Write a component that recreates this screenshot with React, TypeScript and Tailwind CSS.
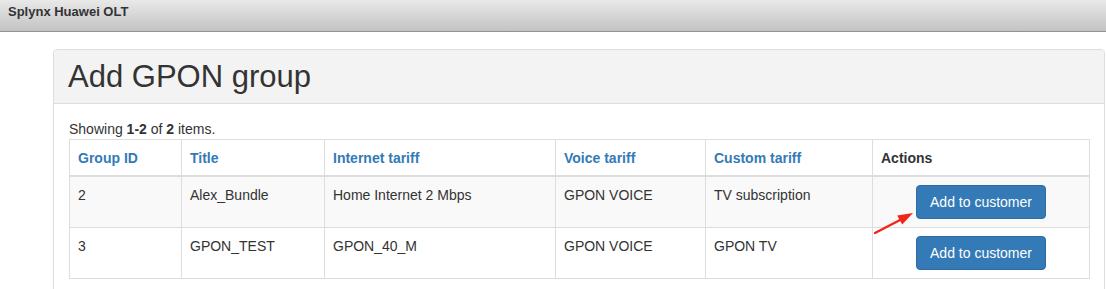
import React from 'react';

const font = { fontFamily: '"Liberation Sans", Arial, sans-serif' };

const rows = [
  { id: '2', title: 'Alex_Bundle', internet: 'Home Internet 2 Mbps', voice: 'GPON VOICE', custom: 'TV subscription' },
  { id: '3', title: 'GPON_TEST', internet: 'GPON_40_M', voice: 'GPON VOICE', custom: 'GPON TV' },
];

const headers = ['Group ID', 'Title', 'Internet tariff', 'Voice tariff', 'Custom tariff'];
const widths = ['w-[112px]', 'w-[143px]', 'w-[231px]', 'w-[150px]', 'w-[167px]', 'w-[217px]'];

export default function App() {
  return (
    <div className="w-[1106px] h-[289px] overflow-hidden bg-white text-[#333]" style={font}>
      {/* Top bar */}
      <div className="h-[32px] bg-gradient-to-b from-[#e9e9e9] to-[#c3c3c3] border-b border-[#929292] px-2 flex items-start pt-[4px]">
        <span className="text-[13px] font-bold text-[#333] leading-[16px]">Splynx Huawei OLT</span>
      </div>

      {/* Panel */}
      <div className="ml-[53px] mr-[1px] mt-[17px] border border-[#ddd] rounded-t-[4px]">
        <div className="h-[54px] bg-[#f3f3f3] border-b border-[#ddd] rounded-t-[4px] px-[14px] flex items-center">
          <h1 className="text-[31px] leading-[34px] text-[#333] font-normal">Add GPON group</h1>
        </div>

        <div className="p-[15px] relative">
          <div className="text-[14px] leading-[20px]">
            Showing <b>1-2</b> of <b>2</b> items.
          </div>
          <table className="w-[1020px] table-fixed border-collapse text-[14px] leading-[20px]">
            <colgroup>
              {widths.map((w, i) => (
                <col key={i} className={w} />
              ))}
            </colgroup>
            <thead>
              <tr>
                {headers.map((h) => (
                  <th key={h} className="border border-[#ddd] border-b-2 px-2 pt-2 pb-[7px] text-left font-bold text-[#337ab7]">
                    {h}
                  </th>
                ))}
                <th className="border border-[#ddd] border-b-2 px-2 pt-2 pb-[7px] text-left font-bold text-[#333]">Actions</th>
              </tr>
            </thead>
            <tbody>
              {rows.map((r, i) => (
                <tr key={r.id} className={i === 0 ? 'bg-[#f9f9f9]' : 'bg-white'}>
                  <td className="border border-[#ddd] p-2 align-top">{r.id}</td>
                  <td className="border border-[#ddd] p-2 align-top">{r.title}</td>
                  <td className="border border-[#ddd] p-2 align-top">{r.internet}</td>
                  <td className="border border-[#ddd] p-2 align-top">{r.voice}</td>
                  <td className="border border-[#ddd] p-2 align-top">{r.custom}</td>
                  <td className="border border-[#ddd] p-2 align-top text-center">
                    <button className="h-[34px] px-[13px] bg-[#337ab7] border border-[#2e6da4] rounded-[4px] text-white text-[14px] leading-[20px]">
                      Add to customer
                    </button>
                  </td>
                </tr>
              ))}
            </tbody>
          </table>

          {/* Red annotation arrow */}
          <svg className="absolute left-[816px] top-[101px] pointer-events-none" width="50" height="36" viewBox="0 0 50 36">
            <line x1="5" y1="28" x2="31" y2="14.5" stroke="#f0261b" strokeWidth="2.5" strokeLinecap="round" />
            <polygon points="43,8 27.2,10.4 32.2,19.6" fill="#f0261b" />
          </svg>
        </div>
      </div>
    </div>
  );
}
